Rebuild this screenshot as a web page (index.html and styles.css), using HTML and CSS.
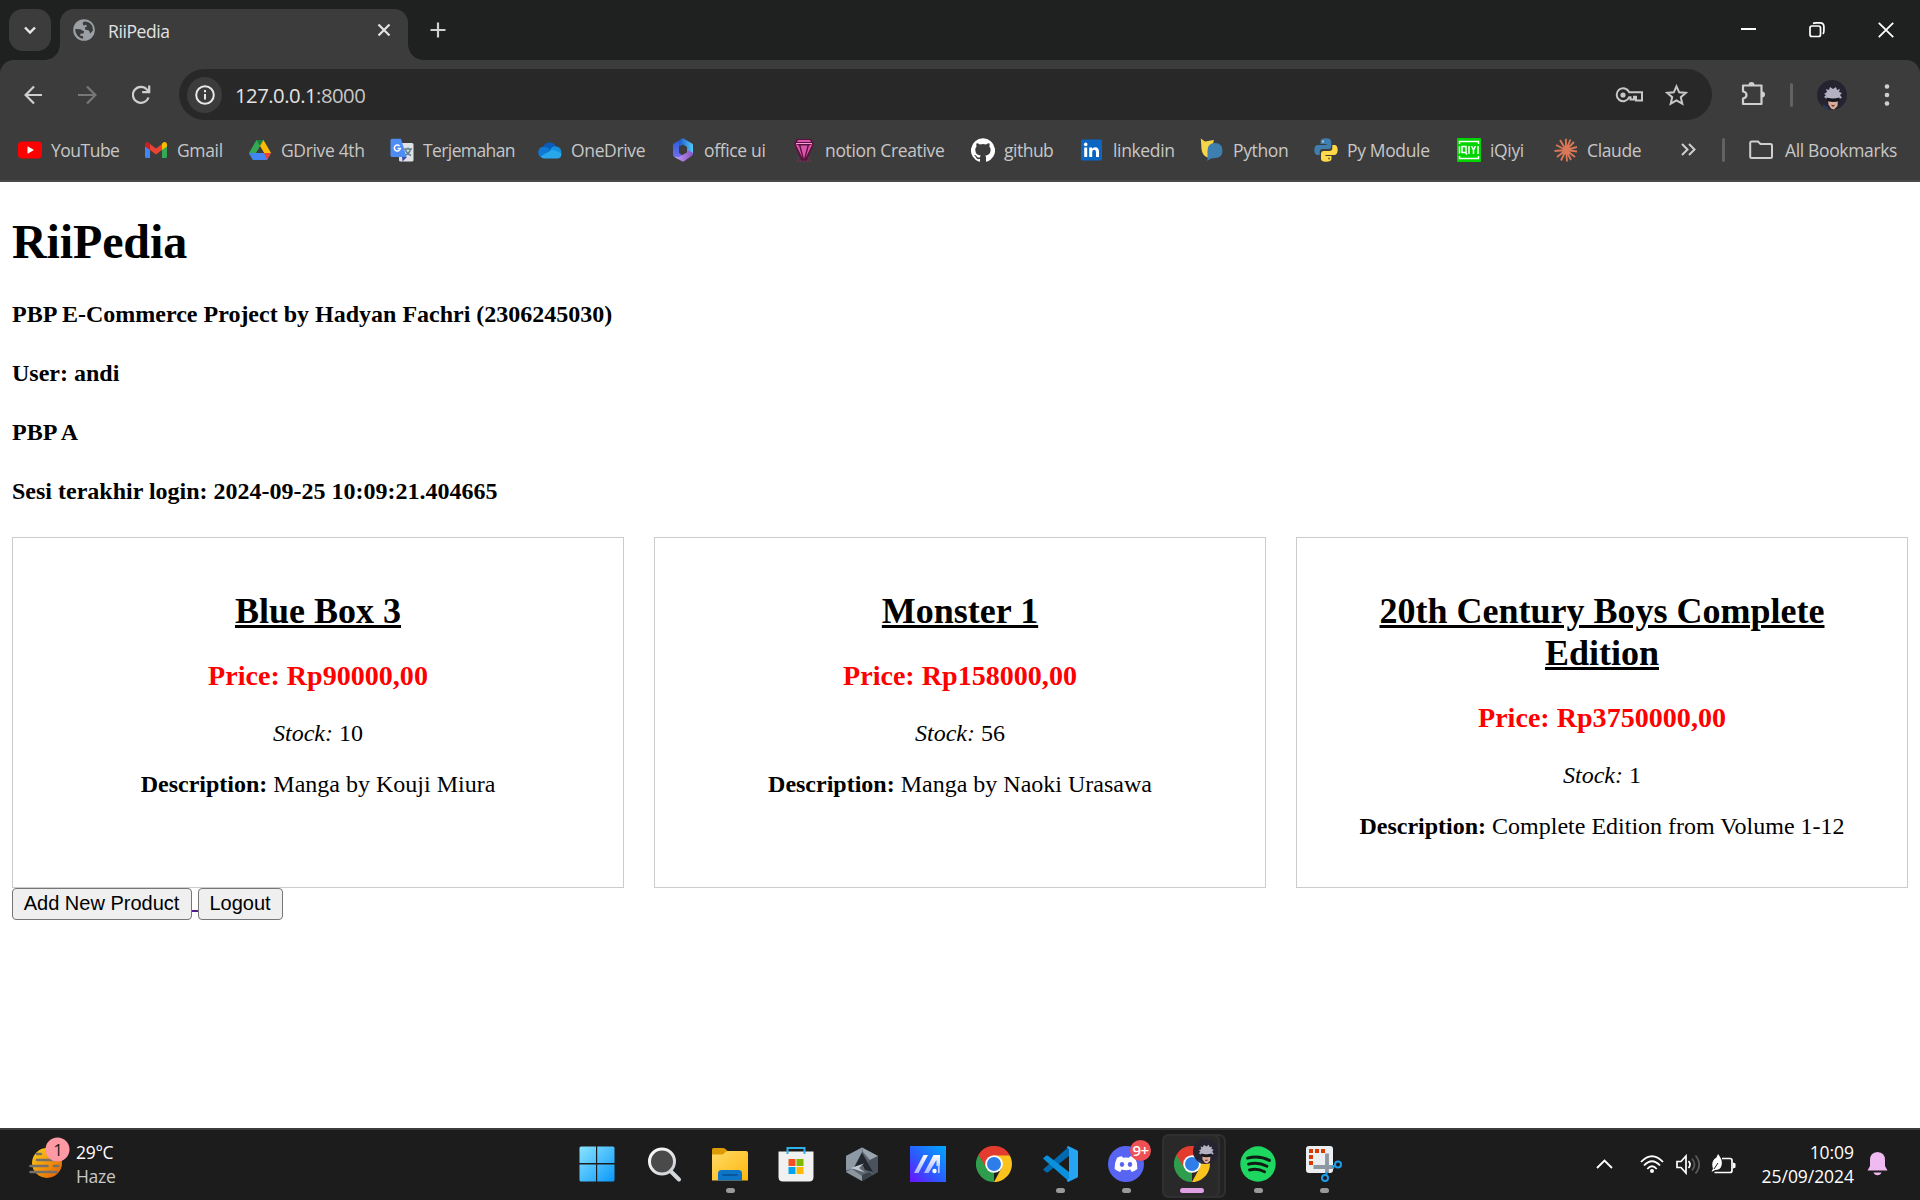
FILE: index.html
```html
<!DOCTYPE html>
<html lang="id">
<head>
<meta charset="utf-8">
<title>RiiPedia</title>
<link rel="stylesheet" href="styles.css">
</head>
<body>
<svg class="defs" width="0" height="0" aria-hidden="true">
  <defs>
    <linearGradient id="sun" x1="0" y1="0" x2="1" y2="1"><stop offset="0" stop-color="#ffd21a"/><stop offset="1" stop-color="#e25a00"/></linearGradient>
    <linearGradient id="win" x1="0" y1="0" x2="1" y2="1"><stop offset="0" stop-color="#8ae4ff"/><stop offset="1" stop-color="#0a98fb"/></linearGradient>
    <linearGradient id="glass" x1="0" y1="0" x2="1" y2="1"><stop offset="0" stop-color="#fff"/><stop offset="1" stop-color="#c9ced3"/></linearGradient>
    <linearGradient id="folder" x1="0" y1="0" x2="1" y2="1"><stop offset="0" stop-color="#ffd968"/><stop offset="1" stop-color="#fdb90b"/></linearGradient>
    <linearGradient id="asus" x1="1" y1="0" x2="0" y2="1"><stop offset="0" stop-color="#00a8ff"/><stop offset=".55" stop-color="#2b5cff"/><stop offset="1" stop-color="#6a12ff"/></linearGradient>
    <linearGradient id="asusm" x1="0" y1="0" x2="0" y2="1"><stop offset="0" stop-color="#fff"/><stop offset="1" stop-color="#a9b4ff"/></linearGradient>
    <linearGradient id="offl" x1="0" y1="0" x2="0" y2="1"><stop offset="0" stop-color="#1f5fd8"/><stop offset="1" stop-color="#7a6ff0"/></linearGradient>
    <linearGradient id="offb" x1="0" y1="0" x2="1" y2="0"><stop offset="0" stop-color="#c3a5f5"/><stop offset="1" stop-color="#8a4fc4"/></linearGradient>
    <linearGradient id="offt" x1="0" y1="0" x2="1" y2="0"><stop offset="0" stop-color="#1b58cf"/><stop offset="1" stop-color="#55c8f5"/></linearGradient>
    <symbol id="chrome" viewBox="0 0 36 36">
      <path d="M18 18 2.4 9A18 18 0 0 1 33.6 9z" fill="#e33b2e"/>
      <path d="M18 18V36A18 18 0 0 1 2.4 9z" fill="#2f9e4c"/>
      <path d="M18 9.5H33.8L33.6 9A18 18 0 0 0 2.4 9L10.6 22.3z" fill="#e33b2e"/>
      <path d="M33.8 9.5H18L25.4 22.3 18 36A18 18 0 0 0 33.8 9.5z" fill="#fcc31e"/>
      <circle cx="18" cy="18" r="8.800" fill="#fff"/><circle cx="18" cy="18" r="7" fill="#2e7de9"/>
    </symbol>
    <symbol id="avatar" viewBox="0 0 30 30">
      <circle cx="15" cy="15" r="15" fill="#262330"/>
      <path d="M11 19h10l-.5 7-3.500 3.500-3-1-2.500-4z" fill="#d9ae98"/>
      <path d="M7 17l2-2-2-1 3-2-1-3 3 1 1-3 3 2 3-2 1 3 3-1-1 3 3 1-2 2 2 3-4 1H10z" fill="#b3b1c2"/>
      <path d="M9.500 17.500q6.500 2 13 0v3.500q-6.500 2-12 0z" fill="#17161d"/>
      <path d="M14 24.500q2 1 4 0l-1 2h-2z" fill="#6e3036"/>
      <path d="M6 24l5 3v3q-3-1-5-3z" fill="#2a355c"/>
    </symbol>
  </defs>
</svg>

<header class="browser">
  <div class="tabstrip">
    <div class="tab-search"><svg width="42" height="42"><path d="M16 18.500l5 5 5-5" fill="none" stroke="#e8e8e8" stroke-width="2.400"/></svg></div>
    <div class="tab">
      <svg width="22" height="22" viewBox="0 0 22 22"><circle cx="11" cy="11" r="10.800" fill="#9aa0a6"/><path d="M11 2.500q-2 1-1 3t3 0l1 2-2 1v2l4 1 1 3 3-3A8.800 8.800 0 0 0 14 2.700zM2.300 10l5 .2 4 2.300-1 2-3 .3v2l2.600.2.400 2.700A8.800 8.800 0 0 1 2.300 10z" fill="#3c3c3c"/></svg>
      <span class="tab-title">RiiPedia</span>
      <svg width="14" height="14"><path d="M1.500 1.500l11 11M12.500 1.500l-11 11" stroke="#e3e3e3" stroke-width="2.200"/></svg>
    </div>
    <svg class="newtab" width="16" height="16"><path d="M8 .5v15M.5 8h15" stroke="#d0d0d0" stroke-width="2.200"/></svg>
    <div class="window-buttons">
      <svg width="15" height="16"><path d="M0 7h15" stroke="#fff" stroke-width="2"/></svg>
      <svg width="16" height="16" fill="none" stroke="#fff" stroke-width="1.700"><rect x="1" y="4" width="10.500" height="10.500" rx="2"/><path d="M4 1.500Q5 .900 7 .900h4q3.900 0 3.900 3.900v4q0 2-1 3"/></svg>
      <svg width="16" height="16"><path d="M.8.800l14.400 14.400M15.200.8L.8 15.200" stroke="#fff" stroke-width="1.800"/></svg>
    </div>
  </div>

  <div class="toolbar">
    <div class="nav">
      <svg width="20" height="20" fill="none" stroke="#cfcfcf" stroke-width="2.200"><path d="M18 10H2M10 1.500L1.600 10l8.400 8.500"/></svg>
      <svg width="20" height="20" fill="none" stroke="#777" stroke-width="2.200"><path d="M0 10h17M9 1.500l8.400 8.500L9 18.500"/></svg>
      <svg width="20" height="20" fill="none" stroke="#cfcfcf" stroke-width="2.200"><path d="M16.500 12.500A8 8 0 1 1 15 4.600L17 7M17.200.5v6.700h-7"/></svg>
    </div>
    <div class="address">
      <div class="site-info"><svg width="20" height="20"><circle cx="10" cy="10" r="8.800" fill="none" stroke="#e8e8e8" stroke-width="2"/><path d="M10 9v5.500M10 5v2.200" stroke="#e8e8e8" stroke-width="2"/></svg></div>
      <span class="url">127.0.0.1<span class="port">:8000</span></span>
      <svg class="key" width="28" height="16" fill="none" stroke="#c7c7c7" stroke-width="2"><path d="M14.200 5.200H27v8.300h-6V9.800h-2v2.700h-3.500V10.200h-1.300A6.500 6.500 0 1 1 14.200 5.200z"/><circle cx="8" cy="8" r="2.600" fill="#c7c7c7" stroke="none"/></svg>
      <svg width="23" height="22" viewBox="0 0 23 22"><path d="M11.500 2.300l2.700 6 6.600.6-5 4.300 1.500 6.500-5.800-3.400-5.800 3.400 1.500-6.500-5-4.300 6.600-.6z" fill="none" stroke="#c7c7c7" stroke-width="2"/></svg>
    </div>
    <svg class="puzzle" width="24" height="25" viewBox="0 0 24 25"><path d="M2 4.500h18.500v18.500H2v-5.500q3.500-.5 3.500-3.500T2 10.500z" fill="none" stroke="#cfcfcf" stroke-width="2.200" stroke-linejoin="round"/><path d="M7.500 4a3 3 0 0 1 6 0zM21 10.500a3 3 0 0 1 0 6z" fill="#cfcfcf"/></svg>
    <span class="sep"></span>
    <svg class="profile" width="30" height="30"><use href="#avatar"/></svg>
    <svg width="6" height="22" fill="#d0d0d0"><circle cx="3" cy="2.500" r="2.300"/><circle cx="3" cy="11" r="2.300"/><circle cx="3" cy="19.500" r="2.300"/></svg>
  </div>

  <nav class="bookmarks">
    <div class="bm w1"><svg viewBox="0 0 24 24"><rect y="3.500" width="24" height="17" rx="4" fill="#f00"/><path d="M9.500 8.200v7.600l6.500-3.800z" fill="#fff"/></svg><span>YouTube</span></div>
    <div class="bm w2"><svg viewBox="0 0 24 24"><path d="M1 6v12.500q0 1.500 1.500 1.500H6V9z" fill="#4285f4"/><path d="M23 6v12.500q0 1.500-1.500 1.500H18V9z" fill="#34a853"/><path d="M6 6l6 4.500L18 6v6l-6 4.500L6 12z" fill="#ea4335"/><path d="M1 6.500q0-3 3-2.500l2 1.500V12L1 8.500z" fill="#c5221f"/><path d="M23 6.500q0-3-3-2.500l-2 1.500V12l5-3.500z" fill="#fbbc04"/></svg><span>Gmail</span></div>
    <div class="bm w3"><svg viewBox="0 0 24 24"><path d="M8.500 2h7L5 22 1 15z" fill="#34a853"/><path d="M8.500 2h7L12 8z" fill="#188038"/><path d="M15.500 2L23 15h-7L12 8z" fill="#fbbc04"/><path d="M1 15h22l-4 7H5z" fill="#4285f4"/><path d="M16 15h7l-4 7z" fill="#ea4335"/><path d="M12 8.500l4 6.500H8z" fill="#3c3c3c"/></svg><span>GDrive 4th</span></div>
    <div class="bm w4"><svg viewBox="0 0 24 24"><rect x="9" y="5" width="14.500" height="18.500" rx="1.500" fill="#dfe1e5"/><path d="M14 11h8M18 9.500V11M20.500 11q-1 4.500-5.500 6.500M15.500 12q1.500 4 5.500 5.500" fill="none" stroke="#5f7f92" stroke-width="1.500"/><path d="M12 19h5l-4.500 4.500z" fill="#3949ab"/><path d="M2 .8h9l5.500 18.200H2Q.5 19 .5 17.500v-15Q.5.800 2 .800z" fill="#4f8df6"/><path d="M9.500 8A3 3 0 1 0 10.300 10.500H7.500" fill="none" stroke="#fff" stroke-width="1.500"/></svg><span>Terjemahan</span></div>
    <div class="bm w5"><svg viewBox="0 0 24 24"><path d="M5 11a6.800 6.800 0 0 1 13-2.500l-7 6z" fill="#0a5cb8"/><path d="M6 8.800Q9 9 12 11.500L4 19.500A5.500 5.500 0 0 1 6 8.800z" fill="#0f78d4"/><path d="M12 12.500q2-5 6.500-4A5.500 5.500 0 0 1 23 16z" fill="#1490df"/><path d="M2.500 18.500L14 11.500l9.300 3.500Q24 20 19.500 20.500H6q-2 0-3.500-2z" fill="#28a8ea"/></svg><span>OneDrive</span></div>
    <div class="bm w6"><svg viewBox="0 0 24 24"><path d="M12 .3L3 5.500q-1 .6-1 2v9q0 1.500 1 2.200l5 2.800 5-3-5-3.500V8z" fill="url(#offl)"/><path d="M12 .3l9 5.200q1 .6 1 2v8.500l-6-3.500V9L12 6.500 8 8.500V2.800z" fill="url(#offt)"/><path d="M22 15q0 2-1 2.700l-8 5.500q-1 .6-2 0L3 18.700l5 .3 8-4.500v-3z" fill="url(#offb)"/></svg><span>office ui</span></div>
    <div class="bm w7"><svg viewBox="0 0 24 24"><path d="M5 1h14l3 5-7.500 17h-5L2 6z" fill="#59113e"/><path d="M6 2h12l1 2H5zM3.500 6L7 7.500 10.500 20zM8.500 7.500h7L12 21zM17 7.500L20.500 6 13.500 20z" fill="#d956ab"/><path d="M4 5.500h16" stroke="#f6a0d7"/><path d="M5 23h14M5 20h3M16 20h3" stroke="#8c2963" stroke-dasharray="2 1"/></svg><span>notion Creative</span></div>
    <div class="bm w8"><svg viewBox="0 0 24 24"><path d="M12 .3a12 12 0 0 0-3.800 23.400c.6.100.8-.3.800-.6v-2c-3.300.7-4-1.600-4-1.600-.6-1.400-1.400-1.800-1.400-1.800-1-.7.1-.7.1-.7 1.200 0 1.900 1.200 1.900 1.200 1 1.800 2.800 1.300 3.500 1 0-.8.400-1.300.7-1.600-2.700-.3-5.500-1.300-5.500-6 0-1.200.5-2.300 1.300-3.100-.2-.4-.6-1.600 0-3.200 0 0 1-.3 3.400 1.200a11.500 11.500 0 0 1 6 0c2.300-1.500 3.300-1.200 3.300-1.200.6 1.600.2 2.800 0 3.200.9.800 1.300 1.900 1.300 3.200 0 4.600-2.800 5.600-5.500 5.900.5.400.9 1 .9 2.200v3.300c0 .3.100.7.800.6A12 12 0 0 0 12 .3" fill="#fff"/></svg><span>github</span></div>
    <div class="bm w9"><svg viewBox="0 0 24 24"><rect x="1" y="1.500" width="21" height="21" rx="1.500" fill="#0a66c2"/><path d="M4.200 9.500h3V19h-3zM9.200 9.500h2.900v1.300q1-1.600 3-1.600 3.900 0 3.900 4.500V19h-3v-4.800q0-2.400-1.800-2.400-2 0-2 2.400V19h-3z" fill="#fff"/><circle cx="5.700" cy="6.400" r="1.800" fill="#fff"/></svg><span>linkedin</span></div>
    <div class="bm w10"><svg viewBox="0 0 24 24"><path d="M.8.500L5 3.500 14 2 9 20Q2 18 1.500 11z" fill="#f7d54a"/><path d="M7.500 23V12.500Q7.500 5 15 5t7.500 7.500-7.500 7.500q-5 0-7.500 3z" fill="#3f7fb0"/></svg><span>Python</span></div>
    <div class="bm w11"><svg viewBox="0 0 24 24"><path d="M12 .3q-5.500 0-5.500 3V6h6v1H4q-3.500 0-3.700 5 .2 5 3.200 5h2.200v-3q0-3 3-3h6q2.500 0 2.500-2.500V3.300Q17 .3 12 .3z" fill="#3f7fb0"/><path d="M12 23.700q5.500 0 5.500-3V18h-6v-1H20q3.500 0 3.700-5-.2-5-3.200-5h-2.200v3q0 3-3 3h-6Q7 13 7 15.500v5.200q0 3 5 3z" fill="#ffd94a"/><circle cx="9" cy="3.500" r="1" fill="#c6dbea"/><circle cx="15" cy="20.500" r="1" fill="#7d6d26"/></svg><span>Py Module</span></div>
    <div class="bm w12"><svg viewBox="0 0 24 24"><rect width="24" height="24" rx="1" fill="#00d400"/><path d="M2.500 6V3.500h19V6M2.500 18v2.500h19V18" fill="none" stroke="#fff" stroke-width="1.500"/><path d="M2.500 8.500v7M5 8.500h4v6H5zM8 14l2 2.500M12 8v8M14.500 8l2 4v4M18.500 8l-2 4M21 8v8" fill="none" stroke="#fff" stroke-width="1.500"/></svg><span>iQiyi</span></div>
    <div class="bm w13"><svg viewBox="0 0 24 24"><path d="M12 12V.8M12 12l4.500-10.500M12 12l8-8M12 12l11-3M12 12l11 1.500M12 12l9 7M12 12l5 10M12 12l1 11.500M12 12L7 22.500M12 12l-9 7M12 12L.5 13M12 12L2 7M12 12L6 2" stroke="#d97757" stroke-width="1.900"/></svg><span>Claude</span></div>
    <svg class="more" width="15" height="13"><path d="M1 1l5.500 5.500L1 12M8 1l5.500 5.500L8 12" fill="none" stroke="#cfcfcf" stroke-width="2"/></svg>
    <span class="sep"></span>
    <div class="bm all"><svg viewBox="0 0 24 24"><path d="M1.200 5q0-1.500 1.500-1.500H9L11.500 6H21.500q1.500 0 1.500 1.500v11.500q0 1-1.500 1H2.700q-1.500 0-1.500-1z" fill="none" stroke="#cfcfcf" stroke-width="2"/></svg><span>All Bookmarks</span></div>
  </nav>
</header>

<main class="page">
  <h1>RiiPedia</h1>
  <h4>PBP E-Commerce Project by Hadyan Fachri (2306245030)</h4>
  <h4>User: andi</h4>
  <h4>PBP A</h4>
  <h4>Sesi terakhir login: 2024-09-25 10:09:21.404665</h4>
  <div class="products">
    <article class="card">
      <h2>Blue Box 3</h2>
      <h3>Price: Rp90000,00</h3>
      <p><i>Stock:</i> 10</p>
      <p><b>Description:</b> Manga by Kouji Miura</p>
    </article>
    <article class="card">
      <h2>Monster 1</h2>
      <h3>Price: Rp158000,00</h3>
      <p><i>Stock:</i> 56</p>
      <p><b>Description:</b> Manga by Naoki Urasawa</p>
    </article>
    <article class="card">
      <h2>20th Century Boys Complete Edition</h2>
      <h3>Price: Rp3750000,00</h3>
      <p><i>Stock:</i> 1</p>
      <p><b>Description:</b> Complete Edition from Volume 1-12</p>
    </article>
  </div>
  <div class="actions"><a><button class="add">Add New Product</button> </a><button class="logout">Logout</button></div>
</main>

<footer class="taskbar">
  <div class="weather">
    <svg width="42" height="44" viewBox="0 0 42 44"><circle cx="18" cy="26" r="15" fill="url(#sun)"/><path d="M8 17h4M8 23h22M1.500 29h17M25 29h4M1.500 35h26" stroke="#77706a" stroke-width="2.600" stroke-linecap="round"/><circle cx="28.500" cy="12.500" r="12" fill="#ff99a4"/></svg>
    <span class="count">1</span>
    <div class="readout"><span>29°C</span><span class="dim">Haze</span></div>
  </div>
  <div class="apps">
    <div class="app start"><svg viewBox="0 0 36 36"><path d="M2 .5H17V17H.500V2Q.5.500 2 .500zM18.200.5H34q1.500 0 1.500 1.500v15H18.200zM.5 18.500H17V35.500H2q-1.500 0-1.500-1.500zM18.200 18.500h17.300V34q0 1.500-1.500 1.500H18.200z" fill="url(#win)"/></svg></div>
    <div class="app"><svg viewBox="0 0 36 36"><path d="M23 23.500l10 10" stroke="#d4d8dc" stroke-width="4" stroke-linecap="round"/><circle cx="16" cy="15.500" r="12.500" fill="#4a4a4a" stroke="url(#glass)" stroke-width="3"/></svg></div>
    <div class="app"><svg viewBox="0 0 36 36"><path d="M0 10V3.500Q0 2 1.500 2H11q2 0 3 1.500L15.500 5 14 10z" fill="#dd9b05"/><path d="M0 8.500h10q1.500 0 2.500-1.500t3-2H34q2 0 2 2V34.500H0z" fill="url(#folder)"/><path d="M6 34.500v-7q0-3.500 3.500-3.500h17q3.500 0 3.500 3.500v7z" fill="#0d75c8"/><path d="M11 29h14" stroke="#064d8e" stroke-width="1.500" stroke-linecap="round"/></svg><i class="dot"></i></div>
    <div class="app"><svg viewBox="0 0 36 36"><path d="M.5 5.500h35V31q0 4.500-4.500 4.500H5Q.500 35.500.500 31z" fill="#f1f1f1"/><path d="M9.500 8V2h17v6" fill="none" stroke="#2fb1ea" stroke-width="2"/><path d="M10.500 13h7v7h-7z" fill="#f25022"/><path d="M18.500 13h7v7h-7z" fill="#7fba00"/><path d="M10.500 21h7v7h-7z" fill="#00a4ef"/><path d="M18.500 21h7v7h-7z" fill="#ffb900"/></svg></div>
    <div class="app"><svg viewBox="0 0 36 36"><path d="M18 1.500L34 10v16L18 35 2 26V10z" fill="#5b6671"/><path d="M18 1.500L2 10v14l7-1L18 6z" fill="#8d99a4"/><path d="M18 1.500L34 10l-8 4-7-8z" fill="#99a4ae"/><path d="M34 10v16l-5 3-5-14z" fill="#4a535d"/><path d="M2 26l16 9V30L8 23z" fill="#8b969f"/><path d="M18 35l11-6-4-3-7 3z" fill="#3c434b"/><path d="M18 6.500L29 26l-8-2-2-4.500L10 22z" fill="#23282e"/><path d="M7 22l13-4.500L15 22l6 4.500z" fill="#c2cad1"/></svg></div>
    <div class="app"><svg viewBox="0 0 36 36"><path d="M0 0h36v36H0z" fill="url(#asus)"/><path d="M4 27L13.500 9h4.500L8.500 27zM14 27L23.500 9H30v11h-3.500V14L18.500 27z" fill="url(#asusm)"/><circle cx="24.500" cy="25" r="2.200" fill="#fff"/><path d="M28.800 18v9" stroke="#b9cbff" stroke-width="1.700"/></svg></div>
    <div class="app"><svg><use href="#chrome"/></svg></div>
    <div class="app"><svg viewBox="0 0 36 36"><path d="M1 23.500l3 2.700q1 .7 2 0L27 10V.500z" fill="#0069b0"/><path d="M1 12.500l3-2.700q1-.7 2 0L27 26v9.500z" fill="#0b91dc"/><path d="M26 0l9 4.200q1 .5 1 1.600v24.400q0 1.100-1 1.600L26 36l-1.300-1.500L27 33V3l-2.300-1.500z" fill="#27a5f3"/></svg><i class="dot"></i></div>
    <div class="app"><svg viewBox="0 0 36 36"><circle cx="18" cy="18" r="18" fill="#5865f2"/><path d="M14 10.200q-2.900.4-5 1.500Q6.400 16.500 6.600 23q2.500 2.200 5.600 2.900l1.500-2.300q4.300 1.300 8.600 0l1.500 2.300q3.100-.7 5.600-2.900.2-6.500-2.400-11.300-2.100-1.100-5-1.500l-.8 1.500q-3.200-.5-6.400 0z" fill="#fff"/><ellipse cx="14" cy="18.500" rx="2.200" ry="2.400" fill="#5865f2"/><ellipse cx="22" cy="18.500" rx="2.200" ry="2.400" fill="#5865f2"/></svg><span class="badge">9+</span><i class="dot"></i></div>
    <div class="app active"><svg><use href="#chrome"/></svg><svg class="mini"><use href="#avatar"/></svg><i class="dot"></i></div>
    <div class="app"><svg viewBox="0 0 36 36"><circle cx="18" cy="18" r="17.700" fill="#1ed760"/><path d="M7.500 12.200q11.500-3.200 22 2.200M8.500 18.200q9.500-2.600 18.500 2M9.500 24q8-2 15 1.700" fill="none" stroke="#101b13" stroke-width="2.900" stroke-linecap="round"/></svg><i class="dot"></i></div>
    <div class="app"><svg viewBox="0 0 36 36"><rect width="27" height="27" rx="3" fill="#eceff1"/><path d="M3 3h4v4H3zM9 3h4v4H9zM15 3h4v4h-4zM3 9h4v4H3zM3 15h4v4H3z" fill="#d83b01"/><path d="M7.500 21H28M21 7.500V27" stroke="#8e979f" stroke-width="3.800"/><circle cx="32" cy="18.500" r="3" fill="none" stroke="#1e9ce8" stroke-width="2"/><circle cx="19" cy="32" r="3" fill="none" stroke="#1e9ce8" stroke-width="2"/><path d="M20 29l1-3M29 20l-3 1" stroke="#1e9ce8" stroke-width="2"/></svg><i class="dot"></i></div>
  </div>
  <div class="tray">
    <svg width="17" height="10"><path d="M1 9l7.500-7.500L16 9" fill="none" stroke="#fff" stroke-width="1.900"/></svg>
    <svg class="wifi" width="24" height="19" fill="none" stroke="#fff" stroke-width="1.800"><path d="M1 7q11-11.500 22 0M4 10.500q8-8.500 16 0M7.300 14q4.700-5.500 9.400 0"/><circle cx="12" cy="16" r="2" fill="#fff" stroke="none"/></svg>
    <svg class="volume" width="25" height="21" fill="none" stroke="#fff" stroke-width="1.700"><path d="M1 7.500h4l5-5.500v17l-5-5.500H1zM12.500 7q3 3.500 0 7"/><path d="M16 4.500q5 6 0 12M19.500 1.500q7.500 9 0 18" stroke="#5a5a5a"/></svg>
    <svg class="battery" width="25" height="20"><path d="M11 4.500h8q2 0 2 2v10q0 2-2 2H3.500" fill="none" stroke="#fff" stroke-width="1.700"/><path d="M22 8.500l2.500 1v4l-2.500 1z" fill="#fff"/><path d="M7 0Q12 6 10.500 11.500 9.500 16 4 16L.5 18 2 14.500Q-.5 7 5.500 3.500z" fill="#fff"/><path d="M3 15l4-6" stroke="#1c1c1c"/></svg>
    <div class="clock"><span>10:09</span><span>25/09/2024</span></div>
    <svg class="bell" width="21" height="24"><path d="M10.500 0q7.500.5 7.500 8v6l2.500 4.500H.5L3 14V8q0-7.500 7.500-8zM6.500 20.500h8q-1 2.800-4 2.800t-4-2.800z" fill="#efb9f2"/></svg>
  </div>
</footer>
</body>
</html>
```
FILE: styles.css
```css
* { box-sizing: border-box; }
html, body { height: 100%; }
body {
  margin: 0;
  display: flex;
  flex-direction: column;
  overflow: hidden;
  background: #fff;
  font-family: "Liberation Serif", "Times New Roman", serif;
}
svg { display: block; flex: none; }
.defs { position: absolute; }

/* Browser frame */
.browser {
  flex: none;
  height: 182px;
  background: #1f2120;
  color: #e3e3e3;
  font-family: "Open Sans", "Noto Sans", sans-serif;
  font-size: 17.500px;
}
.tabstrip { height: 60px; display: flex; align-items: center; padding-left: 9px; }
.tab-search { width: 42px; height: 42px; border-radius: 14px; background: #3c3c3c; }
.tab {
  position: relative;
  align-self: flex-end;
  display: flex;
  align-items: center;
  width: 348px;
  height: 51px;
  margin-left: 9px;
  padding: 0 17px 9px 13px;
  border-radius: 14px 14px 0 0;
  background: #3c3c3c;
}
.tab::before, .tab::after {
  content: "";
  position: absolute;
  bottom: 0;
  width: 15px;
  height: 15px;
}
.tab::before { left: -15px; background: radial-gradient(circle at 0 0, transparent 14.500px, #3c3c3c 15px); }
.tab::after { right: -15px; background: radial-gradient(circle at 100% 0, transparent 14.500px, #3c3c3c 15px); }
.tab-title { flex: 1; margin: 2px 0 0 13px; letter-spacing: -.4px; }
.newtab { margin-left: 22px; }
.window-buttons { display: flex; gap: 53px; margin-left: auto; padding-right: 26px; }

.toolbar {
  height: 69px;
  display: flex;
  align-items: center;
  padding: 0 30px 0 24px;
  border-radius: 14px 14px 0 0;
  background: #3c3c3c;
}
.nav { display: flex; gap: 34px; width: 156px; }
.address {
  flex: none;
  display: flex;
  align-items: center;
  width: 1533px;
  height: 51px;
  padding: 0 24px 0 8px;
  border-radius: 26px;
  background: #282828;
}
.site-info { display: flex; align-items: center; justify-content: center; width: 35px; height: 36px; border-radius: 50%; background: #3c3c3c; }
.url { margin-left: 13px; font-size: 20.300px; letter-spacing: -.500px; }
.port { color: #c7c7c7; }
.key { margin: 0 22px 0 auto; }
.puzzle { margin: -3px 0 0 29px; }
.sep { flex: none; width: 3px; height: 24px; border-radius: 2px; background: #626262; }
.toolbar .sep { margin: 0 24px 0 25px; }
.profile { margin-right: 37px; }

.bookmarks {
  display: flex;
  align-items: center;
  height: 53px;
  padding: 0 0 10px 18px;
  border-bottom: 2px solid #4a4a4a;
  background: #3c3c3c;
  color: #c7c7c7;
  letter-spacing: -.35px;
}
.bm { flex: none; display: flex; align-items: center; gap: 9px; white-space: nowrap; }
.bm svg { width: 24px; height: 24px; }
.w1 { width: 126px; letter-spacing: -.5px; }
.w2 { width: 104px; }
.w3 { width: 142px; }
.w4 { width: 148px; letter-spacing: -.6px; }
.w5 { width: 133px; }
.w6 { width: 121px; }
.w7 { width: 179px; }
.w8 { width: 109px; letter-spacing: -.5px; }
.w9 { width: 120px; }
.w10 { width: 114px; }
.w11 { width: 143px; }
.w12 { width: 97px; }
.w13 { width: 127px; }
.bookmarks .sep { margin: 0 24px 0 26px; }
.all { gap: 12px; }

/* Shop page */
.page { flex: 1; min-height: 0; padding: 0 12px; font-size: 24px; line-height: 27px; overflow: hidden; }
h1, h2, h3, h4, p { margin: 0; }
h1 { margin: 32px 0; font-size: 48px; line-height: 55px; letter-spacing: -.12px; }
h4 { margin-bottom: 32px; font-size: 24px; }
.products { display: grid; grid-template-columns: repeat(3, 612px); gap: 30px; height: 351px; }
.card { padding: 22px; border: 1px solid #ccc; text-align: center; }
h2 { margin: 30px 0 28px; font-size: 36px; line-height: 42px; text-decoration: underline 3px; }
h3 { margin-bottom: 29px; font-size: 28.080px; line-height: 31px; color: #f00; }
p { margin-bottom: 24px; }
.actions a { color: #551a8b; text-decoration: underline 2px; }
.actions { height: 32px; }
.actions button {
  height: 32px;
  padding: 0 1px 2px 0;
  border: 1px solid #767676;
  border-radius: 4px;
  background: #efefef;
  color: #000;
  font: 20px/24px "Liberation Sans", Arial, sans-serif;
  vertical-align: top;
}
.actions .add { width: 180px; }
.actions .logout { width: 85px; }

/* Taskbar */
.taskbar {
  flex: none;
  display: grid;
  grid-template-columns: 565px 790px 1fr;
  height: 72px;
  border-top: 2px solid #3b3b3b;
  background: #1c1c1c;
  color: #fff;
  font-family: "Open Sans", "Noto Sans", sans-serif;
  font-size: 17.500px;
}
.weather { position: relative; display: flex; padding: 7px 0 0 29px; }
.count { position: absolute; left: 46px; top: 8px; width: 24px; color: #222; font-size: 17px; line-height: 24px; text-align: center; }
.readout, .clock { display: flex; flex-direction: column; line-height: 24px; }
.readout { margin: 3px 0 0 5px; letter-spacing: -.3px; }
.dim { color: #c8c8c8; }
.apps { display: flex; }
.app { flex: none; position: relative; width: 66px; padding-top: 16px; display: flex; flex-direction: column; align-items: center; gap: 6px; }
.start { padding-right: 2px; }
.app svg { position: relative; width: 36px; height: 36px; overflow: visible; }
.dot { position: relative; width: 9px; height: 5px; border-radius: 3px; background: #999; }
.badge {
  position: absolute;
  left: 37px;
  top: 10px;
  width: 21px;
  height: 21px;
  border-radius: 50%;
  background: #ee5055;
  font-size: 15px;
  font-weight: 600;
  line-height: 20px;
  text-align: center;
  letter-spacing: -.5px;
}
.active::before, .active::after {
  content: "";
  position: absolute;
  top: 4px;
  height: 60px;
  border: 2px solid #303030;
  border-radius: 7px;
  background: #292929;
}
.active::before { left: 3px; width: 60px; background: #222; }
.active::after { left: 3px; width: 54px; }
.active svg, .active .dot { z-index: 1; }
.app .mini { position: absolute; left: 34px; top: 9px; width: 25px; height: 25px; }
.active .dot { width: 24px; background: #dfa0e4; }
.tray { display: flex; align-items: center; padding: 0 32px 2px 241px; }
.wifi { margin-left: 27px; }
.volume { margin-left: 12px; }
.battery { margin-left: 10px; }
.clock { margin-left: auto; text-align: right; letter-spacing: -.05px; }
.bell { margin-left: 13px; }
```
